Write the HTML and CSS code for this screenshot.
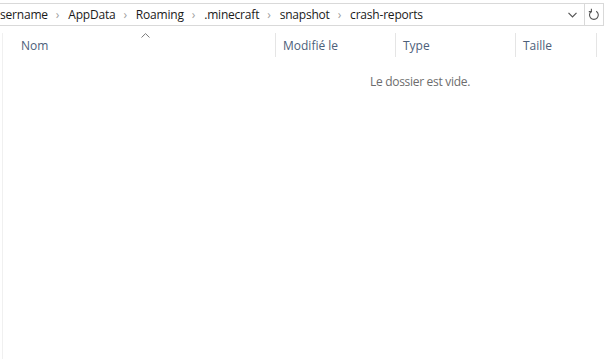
FILE: index.html
```html
<!DOCTYPE html>
<html lang="fr">
<head>
    <meta charset="UTF-8">
    <title>crash-reports</title>
    <link rel="stylesheet" href="styles.css">
</head>
<body>

    <div class="address-bar">
        <div class="crumbs">
            <span class="crumb">sername</span>
            <span class="sep">&#8250;</span>
            <span class="crumb">AppData</span>
            <span class="sep">&#8250;</span>
            <span class="crumb">Roaming</span>
            <span class="sep">&#8250;</span>
            <span class="crumb">.minecraft</span>
            <span class="sep">&#8250;</span>
            <span class="crumb">snapshot</span>
            <span class="sep">&#8250;</span>
            <span class="crumb">crash-reports</span>
        </div>
        <div class="history">
            <svg width="9" height="6" viewBox="0 0 9 6"><path d="M0.5 0.8 L4.5 4.8 L8.5 0.8" fill="none" stroke="#555" stroke-width="1.2"/></svg>
        </div>
        <div class="refresh">
            <svg width="12" height="13" viewBox="0 0 12 13">
                <path d="M8.2 3.2 A4.4 4.4 0 1 1 3.6 3.2" fill="none" stroke="#555" stroke-width="1.1"/>
                <path d="M3.4 0.8 L3.4 3.6 L0.8 3.6" fill="none" stroke="#555" stroke-width="1.1"/>
            </svg>
        </div>
    </div>

    <div class="file-list">
        <div class="list-header">
            <div class="col col-name">Nom
                <svg class="sort-arrow" width="9" height="5" viewBox="0 0 9 5"><path d="M0.5 4.5 L4.5 0.6 L8.5 4.5" fill="none" stroke="#7a7a7a" stroke-width="1"/></svg>
            </div>
            <div class="col col-date">Modifié le</div>
            <div class="col col-type">Type</div>
            <div class="col col-size">Taille</div>
        </div>
        <p class="empty">Le dossier est vide.</p>
    </div>

</body>
</html>
```

FILE: styles.css
```css
body {
    margin: 0;
    background: #fff;
    font-family: "Open Sans", "Noto Sans", sans-serif;
    font-size: 12px;
    overflow: hidden;
}
.address-bar {
    display: flex;
    width: 603px;
    height: 21px;
    margin-top: 3px;
    border-top: 1px solid #d9d9d9;
    border-bottom: 1px solid #d9d9d9;
    border-right: 1px solid #d9d9d9;
}
.crumbs {
    flex: 1;
    display: flex;
    align-items: center;
    color: #1a1a1a;
    letter-spacing: -0.2px;
    white-space: nowrap;
    overflow: hidden;
}
.sep {
    color: #a0a0a0;
    font-size: 12px;
    margin: 0 9px 0 8px;
}
.history {
    width: 16px;
    display: flex;
    align-items: center;
    justify-content: flex-start;
}
.refresh {
    width: 18px;
    border-left: 1px solid #d9d9d9;
    display: flex;
    align-items: center;
    justify-content: center;
}
.file-list {
    margin: 7px 0 0 2px;
    height: 340px;
    border-left: 1px solid #f0f0f0;
}
.list-header {
    display: flex;
    height: 24px;
    color: #4c607a;
}
.col {
    display: flex;
    align-items: center;
    padding-left: 7px;
    border-right: 1px solid #e5e5e5;
    box-sizing: border-box;
}
.col-name {
    position: relative;
    width: 273px;
    padding-left: 18px;
}
.sort-arrow {
    position: absolute;
    left: 138px;
    top: 0;
}
.col-date {
    width: 120px;
}
.col-type {
    width: 120px;
}
.col-size {
    width: 81px;
}
.empty {
    margin: 16px 0 0 367px;
    color: #6d6d6d;
    letter-spacing: -0.3px;
}
```
